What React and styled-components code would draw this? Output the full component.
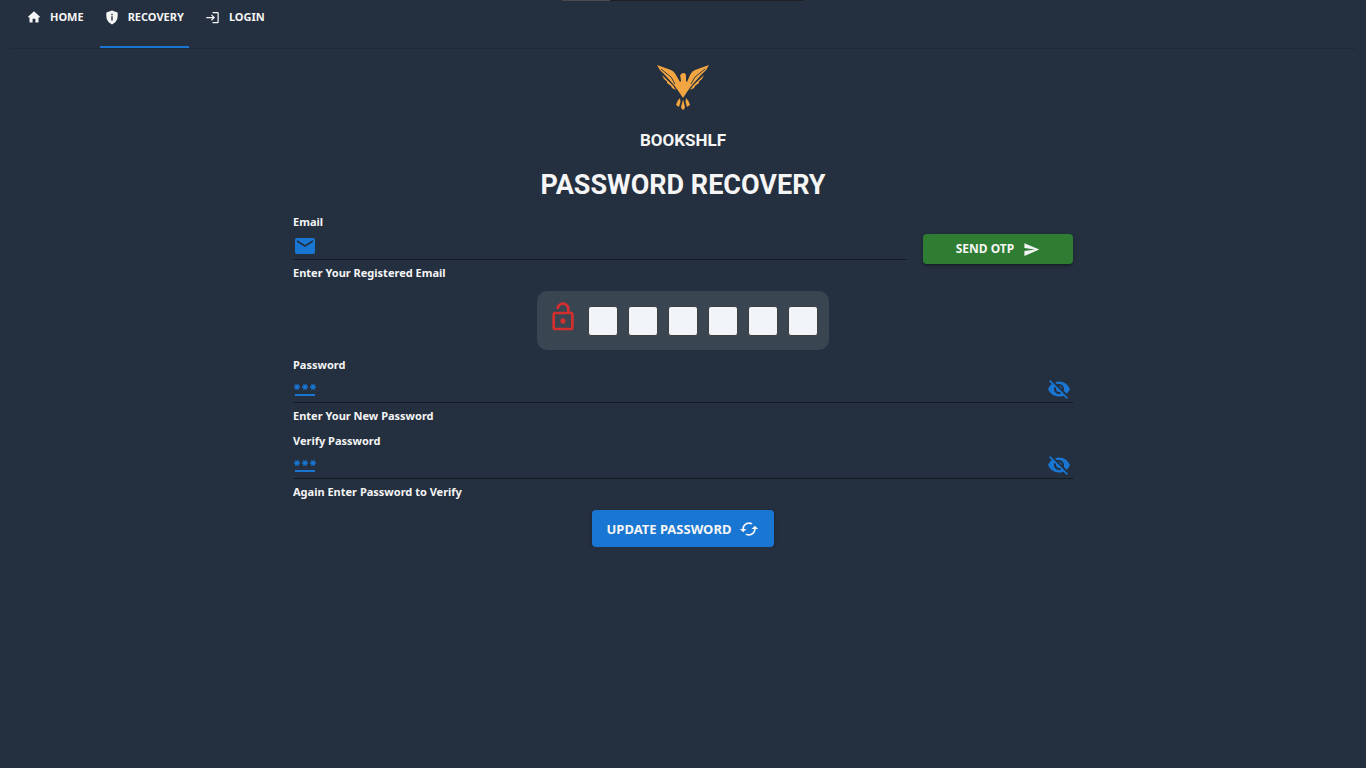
import React, { useState } from 'react';
import styled, { createGlobalStyle } from 'styled-components';
import { MdEmail, MdPassword, MdVisibilityOff, MdVisibility, MdSend, MdOutlineLockOpen, MdCached, MdLogin } from 'react-icons/md';

const GlobalStyle = createGlobalStyle`
  *, *::before, *::after { box-sizing: border-box; }
  body {
    margin: 0;
    background: #242f3f;
    color: #f5f5f5;
    font-family: "Noto Sans", sans-serif;
    font-weight: 700;
    font-size: 11px;
    line-height: 16px;
  }
  button, input { font: inherit; color: inherit; }
`;

const LoadingStrip = styled.div`
  position: absolute;
  top: 0;
  left: 50%;
  width: 242px;
  height: 1px;
  transform: translateX(-50%);
  background: linear-gradient(90deg, #4c4a48 20%, #1f1f1f 20%);
`;

const Nav = styled.nav`
  display: flex;
  gap: 11px;
  height: 49px;
  margin: 0 10px;
  padding-left: 12px;
  border-bottom: 1px solid #1f2a36;
`;

const NavLink = styled.a`
  display: flex;
  align-items: flex-start;
  gap: 9px;
  padding: 9px 5px 0;
  color: inherit;
  text-decoration: none;
  border-bottom: 2px solid ${(p) => (p.$active ? '#1976d2' : 'transparent')};
  svg { margin-top: 1px; }
`;

const Main = styled.main`
  display: flex;
  flex-direction: column;
  align-items: center;
  max-width: 812px;
  margin: 0 auto;
  padding: 16px 16px 0;
`;

const Brand = styled.p`
  margin: 18px 0 0;
  font-family: Roboto, "Liberation Sans", sans-serif;
  font-size: 17px;
  line-height: 22px;
`;

const Title = styled.h1`
  margin: 14px 0 9px;
  font-family: Roboto, "Liberation Sans", sans-serif;
  font-size: 27px;
  line-height: 40px;
`;

const Form = styled.form`
  display: flex;
  flex-direction: column;
  align-items: center;
  width: 100%;
`;

const EmailRow = styled.div`
  display: flex;
  align-items: flex-start;
  gap: 16px;
  width: 100%;
`;

const FieldBox = styled.div`
  flex: 1;
  width: 100%;
  padding-bottom: 9px;
`;

const Label = styled.label`
  display: block;
`;

const InputLine = styled.div`
  display: flex;
  align-items: center;
  height: 30px;
  padding-top: 2px;
  border-bottom: 1px solid #121a22;
  color: #1976d2;
`;

const TextInput = styled.input`
  flex: 1;
  min-width: 0;
  height: 24px;
  margin-left: 8px;
  padding: 0;
  border: 0;
  outline: 0;
  background: transparent;
  color: #f5f5f5;
`;

const IconButton = styled.button`
  display: flex;
  padding: 0;
  margin-right: 2px;
  border: 0;
  background: none;
  color: #1976d2;
  cursor: pointer;
`;

const Hint = styled.p`
  margin: 5px 0 0;
`;

const ActionButton = styled.button`
  display: flex;
  align-items: center;
  justify-content: center;
  gap: ${(p) => (p.$large ? 8 : 9)}px;
  width: ${(p) => (p.$large ? 182 : 150)}px;
  height: ${(p) => (p.$large ? 37 : 30)}px;
  margin-top: ${(p) => (p.$large ? 1 : 20)}px;
  border: 0;
  border-radius: 4px;
  background: ${(p) => (p.$large ? '#1976d2' : '#2e7d32')};
  font-size: ${(p) => (p.$large ? 13 : 12)}px;
  box-shadow: 0 3px 1px -2px rgba(0, 0, 0, 0.2), 0 2px 2px rgba(0, 0, 0, 0.14), 0 1px 5px rgba(0, 0, 0, 0.12);
  cursor: pointer;
`;

const OtpPanel = styled.fieldset`
  display: flex;
  gap: 10px;
  height: 59px;
  margin: 1px 0 7px;
  padding: 10px 11px 0 10px;
  border: 0;
  border-radius: 10px;
  background: #3a4552;
  svg { margin-right: -1px; color: #d32f2f; }
`;

const OtpDigit = styled.input`
  width: 30px;
  height: 30px;
  margin-top: 5px;
  padding: 0;
  border: 1px solid #403e3d;
  border-radius: 3px;
  background: #f1f5f9;
  color: #242f3f;
  text-align: center;
`;

function EagleLogo() {
  return (
    <svg width="54" height="46" viewBox="0 0 54 46" fill="#f2a541" role="img" aria-label="Eagle">
      <path d="M1 0 L15 5 Q18 6 20 10 L24 17 L25 16 L24.5 12 L24 11 Q25 8 27.5 8 Q30 8 30 11 L30 16 L31 17 L34 10 Q36 6 39 5 L53 0 Q51 5 46 9 L36 20 L31 27 L27 33 L23 27 L18 20 L8 9 Q3 5 1 0Z" />
      <path d="M6 10 L17 20.5 L20 25 L16 23 L15 21 L11 18 L11 16.5 L8 14Z M48 10 L37 20.5 L34 25 L38 23 L39 21 L43 18 L43 16.5 L46 14Z" />
      <path d="M5 4 L15 12 L19 19 M49 4 L39 12 L35 19" fill="none" stroke="#242f3f" strokeWidth="0.9" />
      <path d="M27 34.5 L29 42 L28 44.5 L26 44.5 L25 42Z M24 33 L24.5 37 L23 42 L20 40 L21.5 36Z M30 33 L29.5 37 L31 42 L34 40 L32.5 36Z" />
    </svg>
  );
}

function HomeIcon() {
  return (
    <svg width="14" height="14" viewBox="0 0 14 14" fill="currentColor" aria-hidden="true">
      <path d="M7 1.2 L13 6.8 Q12.8 7.7 12 7.5 H11.5 V12.2 Q11.5 12.6 11 12.6 H8.4 V8.8 H5.6 V12.6 H3 Q2.5 12.6 2.5 12.2 V7.5 H2 Q1.2 7.7 1 6.8Z" />
    </svg>
  );
}

function ShieldIcon() {
  return (
    <svg width="14" height="15" viewBox="0 0 14 15" aria-hidden="true">
      <path d="M7 0.5 L12.6 2.6 Q13 5.5 12.4 8.6 Q11.3 12.5 7 14.4 Q2.7 12.5 1.6 8.6 Q1 5.5 1.4 2.6Z" fill="currentColor" />
      <path d="M6.3 3.8 H7.7 V5.2 H6.3Z M6.3 6.2 H7.7 V10.4 H6.3Z" fill="#242f3f" />
    </svg>
  );
}

function PasswordField({ id, label, hint }) {
  const [visible, setVisible] = useState(false);
  return (
    <FieldBox>
      <Label htmlFor={id}>{label}</Label>
      <InputLine>
        <MdPassword size={24} />
        <TextInput id={id} type={visible ? 'text' : 'password'} />
        <IconButton type="button" aria-label="Toggle visibility" onClick={() => setVisible(!visible)}>
          {visible ? <MdVisibility size={24} /> : <MdVisibilityOff size={24} />}
        </IconButton>
      </InputLine>
      <Hint>{hint}</Hint>
    </FieldBox>
  );
}

export default function App() {
  return (
    <>
      <GlobalStyle />
      <LoadingStrip />
      <Nav>
        <NavLink href="#home"><HomeIcon />HOME</NavLink>
        <NavLink href="#recovery" $active><ShieldIcon />RECOVERY</NavLink>
        <NavLink href="#login"><MdLogin size={15} />LOGIN</NavLink>
      </Nav>
      <Main>
        <EagleLogo />
        <Brand>BOOKSHLF</Brand>
        <Title>PASSWORD RECOVERY</Title>
        <Form onSubmit={(e) => e.preventDefault()}>
          <EmailRow>
            <FieldBox>
              <Label htmlFor="email">Email</Label>
              <InputLine>
                <MdEmail size={24} />
                <TextInput id="email" type="email" />
              </InputLine>
              <Hint>Enter Your Registered Email</Hint>
            </FieldBox>
            <ActionButton type="button">SEND OTP <MdSend size={17} /></ActionButton>
          </EmailRow>
          <OtpPanel aria-label="One-time password">
            <MdOutlineLockOpen size={32} />
            {[1, 2, 3, 4, 5, 6].map((n) => (
              <OtpDigit key={n} aria-label={`Digit ${n}`} maxLength={1} inputMode="numeric" />
            ))}
          </OtpPanel>
          <PasswordField id="password" label="Password" hint="Enter Your New Password" />
          <PasswordField id="verify" label="Verify Password" hint="Again Enter Password to Verify" />
          <ActionButton type="submit" $large>UPDATE PASSWORD <MdCached size={20} /></ActionButton>
        </Form>
      </Main>
    </>
  );
}
